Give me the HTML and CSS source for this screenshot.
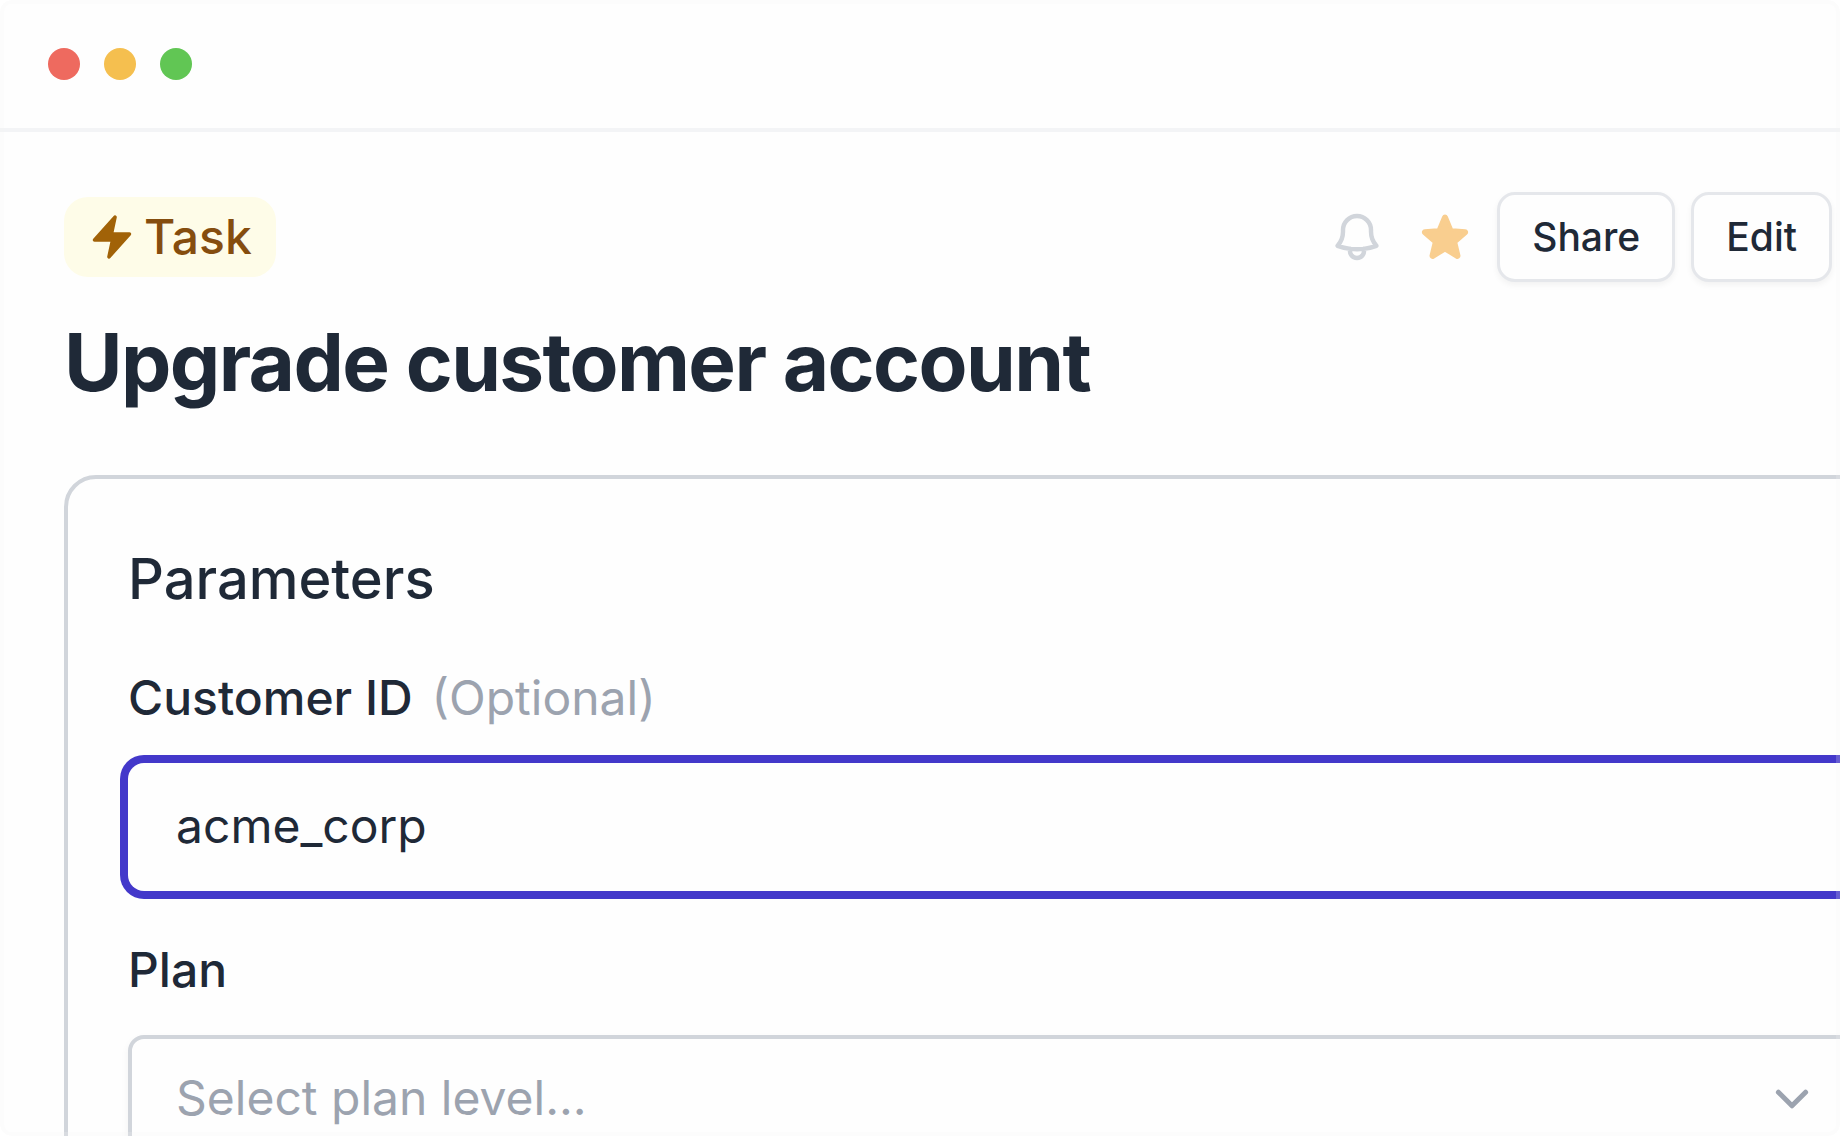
FILE: index.html
```
<!DOCTYPE html>
<html lang="en">
  <head>
    <meta charset="utf-8" />
    <title>Upgrade customer account</title>
    <link rel="stylesheet" href="styles.css" />
  </head>
  <body>
    <div class="window">
      <div class="titlebar">
        <span class="dot dot-red"></span>
        <span class="dot dot-yellow"></span>
        <span class="dot dot-green"></span>
      </div>

      <main class="content">
        <div class="toolbar">
          <div class="badge">
            <svg class="badge-icon" viewBox="0 0 20 20" fill="currentColor" aria-hidden="true">
              <path d="M11.983 1.907a.75.75 0 00-1.292-.657l-8.5 9.5A.75.75 0 002.75 12h6.572l-1.305 6.093a.75.75 0 001.292.657l8.5-9.5A.75.75 0 0017.25 8h-6.572l1.305-6.093z" />
            </svg>
            <span>Task</span>
          </div>

          <div class="actions">
            <div class="icon-group">
              <button class="icon-button bell" type="button" aria-label="Notifications">
                <svg viewBox="0 0 24 24" fill="none" stroke="currentColor" stroke-width="1.9" stroke-linecap="round" stroke-linejoin="round">
                  <path d="M14.857 17.082a23.848 23.848 0 005.454-1.31A8.967 8.967 0 0118 9.75v-.7V9A6 6 0 006 9v.75a8.967 8.967 0 01-2.312 6.022c1.733.64 3.56 1.085 5.455 1.31m5.714 0a24.255 24.255 0 01-5.714 0m5.714 0a3 3 0 11-5.714 0" />
                </svg>
              </button>
              <button class="icon-button star" type="button" aria-label="Favorite">
                <svg viewBox="0 0 24 24" fill="currentColor" stroke="currentColor" stroke-width="1.5" stroke-linecap="round" stroke-linejoin="round">
                  <path d="M11.48 3.499a.562.562 0 011.04 0l2.125 5.111a.563.563 0 00.475.345l5.518.442c.499.04.701.663.321.988l-4.204 3.602a.563.563 0 00-.182.557l1.285 5.385a.562.562 0 01-.84.61l-4.725-2.885a.563.563 0 00-.586 0L6.982 20.54a.562.562 0 01-.84-.61l1.285-5.386a.562.562 0 00-.182-.557l-4.204-3.602a.563.563 0 01.321-.988l5.518-.442a.563.563 0 00.475-.345L11.48 3.5z" />
                </svg>
              </button>
            </div>
            <div class="button-group">
              <button class="button" type="button">Share</button>
              <button class="button" type="button">Edit</button>
            </div>
          </div>
        </div>

        <h1>Upgrade customer account</h1>

        <form class="panel">
          <h2>Parameters</h2>
          <div class="form-group">
            <label for="customer_id">Customer ID <span class="optional">(Optional)</span></label>
            <input class="control focused" type="text" id="customer_id" name="customer_id" value="acme_corp" />
          </div>
          <div class="form-group">
            <label for="plan">Plan</label>
            <div class="select-container">
              <select class="control" id="plan" name="plan">
                <option value="">Select plan level...</option>
              </select>
              <svg class="chevron" viewBox="0 0 24 24" fill="none" stroke="currentColor" stroke-width="2.5" stroke-linecap="round" stroke-linejoin="round" aria-hidden="true">
                <path d="M18.8 8.6 12 15.4 5.2 8.6" />
              </svg>
            </div>
          </div>
        </form>
      </main>
    </div>
  </body>
</html>
```

FILE: styles.css
```
* {
  box-sizing: border-box;
}

body {
  font-family: Inter, "Liberation Sans", sans-serif;
  margin: 0;
  color: #1f2937;
  background-color: #ffffff;
}

.window {
  position: relative;
  height: 100vh;
  overflow: hidden;
  background-color: #fefefe;
  border-radius: 12px;
}

/* translucent frame, drawn over the content */
.window::after {
  content: "";
  position: absolute;
  inset: 0;
  border: 4px solid rgba(243, 244, 246, 0.2);
  border-radius: 12px;
  pointer-events: none;
}

.titlebar {
  display: flex;
  gap: 24px;
  padding: 48px;
  border-bottom: 4px solid #f3f4f6;
}

.dot {
  width: 32px;
  height: 32px;
  border-radius: 50%;
}

.dot-red {
  background-color: #ee6a5f;
}

.dot-yellow {
  background-color: #f5bf4f;
}

.dot-green {
  background-color: #61c654;
}

.content {
  padding: 60px 8px 64px 64px;
}

.toolbar {
  display: flex;
  align-items: center;
  justify-content: space-between;
}

.badge {
  display: flex;
  align-items: center;
  gap: 8px;
  padding: 12px 24px;
  border-radius: 24px;
  background-color: #fefce8;
  color: #854d0e;
  font-size: 48px;
  font-weight: 500;
  line-height: 56px;
}

.badge-icon {
  width: 48px;
  height: 48px;
  color: #a16207;
}

.actions {
  display: flex;
  align-items: center;
  gap: 24px;
}

.icon-group {
  display: flex;
  gap: 32px;
}

.button-group {
  display: flex;
  gap: 16px;
}

.icon-button {
  display: block;
  width: 56px;
  height: 56px;
  padding: 0;
  border: none;
  background: none;
  cursor: pointer;
}

.icon-button svg {
  display: block;
}

.bell {
  color: #d1d5db;
}

.star {
  color: #f9ce8f;
}

.button {
  padding: 16px 32px;
  border: 3px solid #e5e7eb;
  border-radius: 18px;
  background-color: #fefefe;
  box-shadow: 0 3px 6px rgba(0, 0, 0, 0.05);
  color: #1f2937;
  font-family: inherit;
  font-size: 39px;
  font-weight: 500;
  line-height: 52px;
  cursor: pointer;
}

h1 {
  margin: 36px 0 69px;
  font-size: 80px;
  font-weight: 700;
  line-height: 88px;
  letter-spacing: -0.02em;
}

/* runs past the right edge of the window */
.panel {
  margin-right: -96px;
  padding: 68px 60px;
  border: 4px solid #d1d5db;
  border-radius: 32px;
}

h2 {
  margin: 0 0 59px;
  font-size: 56px;
  font-weight: 500;
  line-height: 64px;
}

.form-group {
  margin-bottom: 51px;
}

.form-group label {
  display: block;
  margin-bottom: 37px;
  font-size: 48px;
  font-weight: 500;
  line-height: 56px;
}

.optional {
  margin-left: 6px;
  color: #9ca3af;
  font-weight: 400;
}

.control {
  display: block;
  width: 100%;
  height: 128px;
  padding: 0 44px 4px;
  border: 4px solid #d1d5db;
  border-radius: 16px;
  background-color: #fefefe;
  box-shadow: 0 4px 8px rgba(0, 0, 0, 0.05);
  color: #1f2937;
  font-family: inherit;
  font-size: 48px;
  appearance: none;
}

.focused {
  border-color: transparent;
  outline: none;
  box-shadow: 0 0 0 8px #4338ca;
}

select.control {
  color: #9ca3af;
}

.select-container {
  position: relative;
}

.chevron {
  position: absolute;
  top: 40px;
  right: 48px;
  width: 48px;
  height: 48px;
  color: #9ca3af;
  pointer-events: none;
}
```
